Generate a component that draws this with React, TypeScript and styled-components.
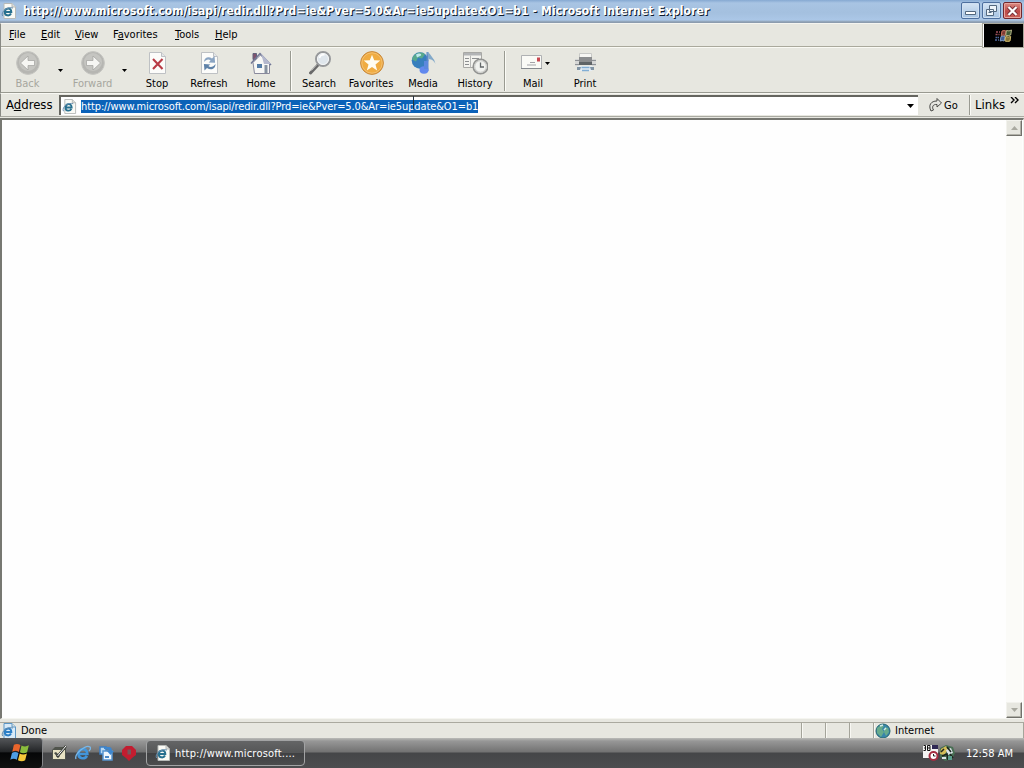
import React from "react";
import styled, { createGlobalStyle } from "styled-components";

const GlobalStyle = createGlobalStyle`
  * {
    box-sizing: border-box;
  }
  body {
    margin: 0;
    overflow: hidden;
    font-family: Tahoma, "DejaVu Sans Condensed", "DejaVu Sans", sans-serif;
    font-size: 11px;
    color: #000;
  }
  svg {
    display: block;
    flex: none;
  }
`;

const Screen = styled.div`
  display: flex;
  flex-direction: column;
  width: 1024px;
  height: 768px;
  background: #e7e7e0;
`;

const Text = styled.span<{ $spacing?: number; $size?: number }>`
  white-space: nowrap;
  font-size: ${(p) => p.$size ?? 11}px;
  letter-spacing: ${(p) => p.$spacing ?? 0}px;
`;

const TitleBar = styled.header`
  display: flex;
  align-items: center;
  height: 23px;
  padding: 0 2px 2px 1px;
  background: linear-gradient(#86a9d2 0, #a8c4e3 3px, #a4c0df 55%, #abc7e7 20px, #8c9cae 22px);
`;

const Title = styled.h1<{ $spacing: number }>`
  flex: 1;
  margin: 0 0 0 6px;
  color: #fff;
  font-size: 12px;
  font-weight: bold;
  line-height: 20px;
  white-space: nowrap;
  letter-spacing: ${(p) => p.$spacing}px;
  text-shadow: 1px 1px 0 #0c1a2c;
`;

const CaptionButton = styled.button<{ $close?: boolean }>`
  display: flex;
  align-items: center;
  justify-content: center;
  width: 19px;
  height: 17px;
  margin-left: 2px;
  padding: 0;
  border: 1px solid ${(p) => (p.$close ? "#71282e" : "#4d6f9e")};
  border-radius: 2px;
  background: ${(p) =>
    p.$close
      ? "linear-gradient(#dc8d84, #bd4a48 55%, #cb6259)"
      : "linear-gradient(#d5e4f3, #a5c2e2)"};
  box-shadow: inset 0 0 0 1px ${(p) => (p.$close ? "#e8a69f" : "#cfe0f2")};
`;

const MenuBar = styled.nav`
  display: flex;
  height: 25px;
  border-top: 1px solid #f5f5f0;
  border-left: 1px solid #888983;
`;

const MenuItems = styled.div`
  display: flex;
  flex: 1;
  align-items: center;
  height: 23px;
  padding: 0 0 2px 8px;
  border-bottom: 1px solid #aaa99c;
  box-shadow: 0 1px #fafaf4;
`;

const MenuItem = styled.span<{ $width: number }>`
  width: ${(p) => p.$width}px;
  white-space: nowrap;
`;

const Brand = styled.div`
  display: flex;
  align-items: center;
  justify-content: center;
  width: 40px;
  height: 23px;
  border-left: 1px solid #fff;
  background: #000;
  margin-right: 1px;
  outline: 1px solid #aaa99c;
`;

const Toolbar = styled.div`
  display: flex;
  height: 45px;
  padding-left: 1px;
  border-left: 1px solid #888983;
  border-bottom: 1px solid #999a91;
`;

const ToolButton = styled.div<{ $width?: number; $disabled?: boolean }>`
  display: flex;
  flex-direction: column;
  align-items: center;
  width: ${(p) => p.$width ?? 52}px;
  padding-top: 2px;
  color: ${(p) => (p.$disabled ? "#a6a69e" : "#000")};
  line-height: 15px;
`;

const IconRow = styled.div<{ $indent?: number }>`
  display: flex;
  align-items: center;
  height: 26px;
  padding-left: ${(p) => p.$indent ?? 0}px;
`;

const DropArrow = styled.div<{ $width?: number }>`
  display: flex;
  align-items: center;
  justify-content: center;
  width: ${(p) => p.$width ?? 14}px;
`;

const Separator = styled.div<{ $height?: number }>`
  width: 6px;
  height: ${(p) => p.$height ?? 40}px;
  margin-top: ${(p) => (p.$height ? 0 : 3)}px;
  background: linear-gradient(90deg, transparent 3px, #999a91 3px, #999a91 4px, #fbfbf6 4px, #fbfbf6 5px, transparent 5px);
`;

const AddressBar = styled.div`
  display: flex;
  align-items: center;
  height: 24px;
  margin-bottom: 1px;
  padding: 1px 2px 1px 5px;
  border-left: 1px solid #888983;
  border-top: 1px solid #f8f8f3;
  border-bottom: 1px solid #aaaaa2;
`;

const AddressLabel = styled.div`
  width: 53px;
  padding-bottom: 1px;
`;

const AddressField = styled.div`
  display: flex;
  align-items: center;
  width: 859px;
  height: 20px;
  padding: 0 2px 0 1px;
  border-top: 2px solid #65655f;
  border-left: 2px solid #65655f;
  background: #fff;
`;

const Selected = styled.span<{ $spacing: number }>`
  height: 13px;
  margin-left: 4px;
  background: #0b62b8;
  color: #fff;
  line-height: 13px;
  white-space: nowrap;
  letter-spacing: ${(p) => p.$spacing}px;
`;

const Spacer = styled.div`
  flex: 1;
`;

const GoButton = styled.div`
  display: flex;
  align-items: center;
  gap: 1px;
  width: 48px;
  padding-left: 11px;
`;

const LinksLabel = styled.div`
  display: flex;
  gap: 5px;
  padding: 0 0 1px 3px;
`;

const TextCursor = styled.div`
  position: absolute;
  left: 413px;
  top: 96px;
  width: 1px;
  height: 13px;
  background: #26323e;
`;

const Page = styled.main`
  display: flex;
  height: 601px;
  border: solid;
  border-width: 2px 1px 1px 2px;
  border-color: #777872 #f5f5f0 #f5f5f0 #777872;
  background: #fefefe;
`;

const Content = styled.div`
  flex: 1;
`;

const ScrollBar = styled.div`
  display: flex;
  flex-direction: column;
  justify-content: space-between;
  width: 16px;
  margin-right: 1px;
  background: #fbfbf8;
`;

const ScrollButton = styled.div`
  display: flex;
  align-items: center;
  justify-content: center;
  height: 16px;
  border: 1px solid;
  border-color: #f2f2ed #71716b #71716b #f2f2ed;
  background: #e7e7e0;
  box-shadow: inset -1px -1px #b1b1a8;
`;

const StatusBar = styled.footer`
  display: flex;
  height: 19px;
  padding-top: 3px;
`;

const StatusPane = styled.div<{ $width?: number }>`
  display: flex;
  align-items: center;
  gap: 4px;
  flex: ${(p) => (p.$width ? "none" : 1)};
  width: ${(p) => (p.$width ? `${p.$width}px` : "auto")};
  height: 16px;
  padding-left: 1px;
  border-top: 1px solid #aaa99f;
  border-right: 1px solid #a4a49a;
  box-shadow: 1px 0 #f8f8f3;
`;

const TaskBar = styled.div`
  display: flex;
  align-items: center;
  height: 30px;
  background: linear-gradient(#bbbcb8 0, #979797 3px, #727272 14px, #454648 15px, #4c4d4f 100%);
`;

const StartButton = styled.div`
  display: flex;
  align-items: center;
  justify-content: center;
  width: 43px;
  height: 30px;
  border-right: 1px solid #85878a;
  border-radius: 0 4px 4px 0;
  background: linear-gradient(#55575a, #242628 45%, #050607 50%, #111);
`;

const QuickLaunch = styled.div`
  display: flex;
  align-items: center;
  gap: 7px;
  width: 103px;
  padding-left: 8px;
`;

const TaskButton = styled.div`
  display: flex;
  align-items: center;
  gap: 4px;
  width: 159px;
  height: 26px;
  padding-left: 8px;
  border: 1px solid #a2a3a4;
  border-radius: 4px;
  background: linear-gradient(#646566, #555657 48%, #404143 52%, #4b4c4d);
  color: #fff;
`;

const Tray = styled.div`
  display: flex;
  align-items: center;
  padding-right: 11px;
  color: #fff;
`;

const Clock = styled.div`
  margin-left: 10px;
`;

function Triangle({ w = 5, up, color = "#000" }: { w?: number; up?: boolean; color?: string }) {
  const h = Math.ceil(w / 2);
  return (
    <svg width={w} height={h} viewBox={`0 0 ${w} ${h}`}>
      <path d={up ? `M0 ${h}H${w}L${w / 2} 0Z` : `M0 0H${w}L${w / 2} ${h}Z`} fill={color} />
    </svg>
  );
}

function IePageIcon({ size = 16, blue }: { size?: number; blue?: boolean }) {
  return (
    <svg width={size} height={size} viewBox="0 0 16 16">
      <path d="M3 .5h8l3.5 3.5v11.5H3z" fill={blue ? "#d9ebf8" : "#fafaf5"} stroke={blue ? "#5d97c6" : "#b7bab8"} />
      <path d="M11 .5V4h3.5" fill="#dcdeda" stroke={blue ? "#5d97c6" : "#b7bab8"} />
      <path
        d="M3 9h7.3c0-5-6.5-4.4-6.5.2 0 3.8 4.8 4.2 6.2 1.3"
        fill="none"
        stroke={blue ? "#2c7fc6" : "#27708f"}
        strokeWidth="2"
      />
      <path d="M1.5 13C-.5 8 7 3.5 12 5" fill="none" stroke="#648cae" />
    </svg>
  );
}

function IeIcon() {
  return (
    <svg width="16" height="16" viewBox="0 0 16 16">
      <path d="M3.3 9h9.1c0-7-9.3-6.1-8.9.4.3 4.7 6.4 5.1 8.4 1.4" fill="none" stroke="#4295db" strokeWidth="2.6" />
      <path d="M1 14C-1 9 11-1 15 2c1 1 0 3-1 4" fill="none" stroke="#79b7e8" strokeWidth="1.3" />
    </svg>
  );
}

function WindowsFlag({ size = 24 }: { size?: number }) {
  return (
    <svg width={size} height={size} viewBox="0 0 22 22">
      <path d="M4.5 3.5c2-1.2 4-1.1 6 .2L9 10c-2-1.3-4-1.3-6-.2z" fill="#e9652c" />
      <path d="M11.5 4.2c2.4 1.2 4.5 1.1 6.7-.2l-1.6 6.3c-2.2 1.2-4.4 1.3-6.6 0z" fill="#8abc3c" />
      <path d="M2.7 11c2-1.2 4-1.1 6 .1l-1.5 6.2c-2-1.3-4-1.2-6-.1z" fill="#4d9ee5" />
      <path d="M9.8 11.5c2.2 1.2 4.4 1.2 6.6 0l-1.6 6.2c-2.2 1.3-4.4 1.2-6.6-.1z" fill="#f5c83a" />
    </svg>
  );
}

// Outlined flag with a pixel trail, used in the corner of the menu bar
function BrandFlag() {
  return (
    <svg width="20" height="16" viewBox="0 0 20 16">
      <path d="M8 3q2-1 4 0l-.8 4.5q-2-1-4 0z" fill="#7c3a34" stroke="#c9705c" />
      <path d="M12.5 2.5q2.5 1 5-.5L16.700 7q-2.500 1-5 .4z" fill="#3e5a35" stroke="#b3b184" />
      <path d="M7 8.500q2-1 4 0L10.200 13q-2-1-4 0z" fill="#3e5d92" stroke="#7f9bc5" />
      <path d="M11.700 8.500q2.500 1 5 0L16 13q-2.500 1-5 0z" fill="#857438" stroke="#d0b968" />
      <path d="M2 4h2M5 4h1M1.500 6.500h2M4.500 6.500h1" stroke="#a0525c" strokeWidth="1.500" />
      <path d="M1.500 9.500h2M4 9.500h1M1 12h2M4 12h1" stroke="#4d68a0" strokeWidth="1.500" />
    </svg>
  );
}

function ArrowIcon({ forward }: { forward?: boolean }) {
  return (
    <svg width="26" height="26" viewBox="0 0 26 26">
      <circle cx="13" cy="13" r="11.4" fill="#b6b6b2" stroke="#c6c6c2" />
      <circle cx="13" cy="12" r="9" fill="#c5c5c1" />
      <path
        d="M5.500 13l7.500-7v4.500h6.500v5H13V20z"
        fill="#f6f6f3"
        stroke="#a0a09d"
        strokeWidth=".7"
        transform={forward ? "matrix(-1 0 0 1 26 0)" : undefined}
      />
    </svg>
  );
}

function StopIcon() {
  return (
    <svg width="26" height="26" viewBox="0 0 26 26">
      <path d="M5.5 2.5h12l4 4v17h-16z" fill="#fcfcfa" stroke="#bec1c4" />
      <path d="M17.5 2.5v4h4" fill="#e4e6e7" stroke="#bec1c4" />
      <path d="M9 9l9.5 10M18.5 9L9 19" stroke="#b83b45" strokeWidth="2.1" />
    </svg>
  );
}

function RefreshIcon() {
  return (
    <svg width="26" height="26" viewBox="0 0 26 26">
      <path d="M5.5 2.5h12l4 4v17h-16z" fill="#fcfcfa" stroke="#bec1c4" />
      <path d="M17.5 2.5v4h4" fill="#e4e6e7" stroke="#bec1c4" />
      <path d="M8 12c0-5 5-6 8-3.500l2.500-2.500.6 6.800-6.500-.4 2-1.800c-2-2-4.500-1-6.600 1.400z" fill="#8aa4c2" />
      <path d="M19.500 14c0 5.500-5 6.500-8.500 4l-2.500 2.500-.6-6.500 6.500.4-2 1.700c2 1.700 5 .9 7.100-2.100z" fill="#5f82a8" />
    </svg>
  );
}

function HomeIcon() {
  return (
    <svg width="26" height="26" viewBox="0 0 26 26">
      <path d="M5 3.500h3.500v6H5z" fill="#81536d" stroke="#62627a" />
      <path d="M5 12.5L12.5 5l9 9v9.500h-15z" fill="#f7f7f5" stroke="#89899c" />
      <path d="M3 13.500L12 3.5 23 15" fill="none" stroke="#717795" strokeWidth="1.500" />
      <path d="M13 3.5L23 14h-7z" fill="#b4b8cd" />
      <path d="M9 14h5v4H9z" fill="#547ca6" />
      <path d="M16.500 15h3v8h-3z" fill="#8792a0" />
    </svg>
  );
}

function SearchIcon() {
  return (
    <svg width="26" height="26" viewBox="0 0 26 26">
      <path d="M12 15L4.500 23" stroke="#696969" strokeWidth="3" strokeLinecap="round" />
      <path d="M10.500 15l-5 5.5" stroke="#bcbcbc" />
      <circle cx="17" cy="9" r="7" fill="#e4e9ec" stroke="#97999b" strokeWidth="2" />
      <circle cx="17" cy="9" r="5.500" fill="#dfe6ec" stroke="#f4f5f6" />
      <path d="M13.500 8q1-4 5-3" fill="none" stroke="#fff" strokeWidth="1.5" />
    </svg>
  );
}

function FavoritesIcon() {
  return (
    <svg width="26" height="26" viewBox="0 0 26 26">
      <circle cx="14" cy="13" r="11.4" fill="#e8a037" stroke="#c98b3f" />
      <circle cx="14" cy="13" r="10.2" fill="#f0ac42" stroke="#f5c274" />
      <path d="M14 4.7l2.200 5.600 6.100.3-4.800 3.900 1.700 5.900-5.200-3.300-5.200 3.300 1.700-5.900-4.800-3.900 6.100-.3z" fill="#fffdf2" />
    </svg>
  );
}

function MediaIcon() {
  return (
    <svg width="28" height="26" viewBox="0 0 28 26">
      <circle cx="11" cy="10.500" r="8.3" fill="#377fbd" />
      <path d="M4 6.500c4-5 10-5 12-2l-3 4-4-1-2 4-4-2z" fill="#58a98c" />
      <path d="M7 4.500c3-2 6-1 5 1l-4 2z" fill="#c0e9ed" />
      <path d="M18.500 2v19" stroke="#5c86c8" strokeWidth="2" />
      <path d="M18 2q3 1 5 5 3 3 3.500 7-2-4-4.500-4.500L19.500 9z" fill="#83a9c9" />
      <ellipse cx="15" cy="20" rx="4.500" ry="3.700" fill="#6289ee" />
      <path d="M15 11h4v8h-4z" fill="#5b88dd" />
    </svg>
  );
}

function HistoryIcon() {
  return (
    <svg width="26" height="26" viewBox="0 0 26 26">
      <path d="M1.5 2.5h18v15h-18z" fill="#f3f3ef" stroke="#a8a8a5" />
      <path d="M2 3h17v2.500H2z" fill="#b2b4b6" />
      <path d="M8.500 5.500v12" stroke="#b8b9b7" />
      <path d="M3 8.500h4M10 8.500h7M3 11.500h4M3 14.500h4" stroke="#8d8f91" />
      <circle cx="18.500" cy="16.500" r="7.3" fill="#ecedea" stroke="#929391" strokeWidth="1.6" />
      <circle cx="18.500" cy="16.500" r="5.800" fill="#f1f2ef" stroke="#c6c7c4" />
      <path d="M18.500 12.500v4.500h3.500" fill="none" stroke="#626769" strokeWidth="1.3" />
    </svg>
  );
}

function MailIcon() {
  return (
    <svg width="22" height="26" viewBox="0 0 22 26">
      <path d="M.5 5.5h20v13H.5z" fill="#fafaf6" stroke="#afb1b3" />
      <path d="M0 18.5h21" stroke="#868a8f" />
      <path d="M16 7.5h3v4h-3z" fill="#c94851" />
      <path d="M9 12.500h5M6 15h9" stroke="#a3a3a8" />
    </svg>
  );
}

function PrintIcon() {
  return (
    <svg width="26" height="26" viewBox="0 0 26 26">
      <path d="M7.500 3.500h12v4h-12z" fill="#f6f6f3" stroke="#c8c9c7" />
      <path d="M3 9h4v7H3zM20 9h4v7h-4z" fill="#d6d7d6" />
      <path d="M3 10.500h4M20 10.500h4M3 14.500h5M19 14.500h5" stroke="#8e9296" />
      <path d="M7 7h13v5H7z" fill="#8b8d8f" />
      <path d="M7 12h13v3H7z" fill="#5f6467" />
      <path d="M6 16h15l-1 5H7z" fill="#e4edf4" />
      <path d="M5 17h4l-1 3H5zM18 17h4v3h-3z" fill="#8194a4" />
      <path d="M9.500 17.500h8M10 20.500h7" stroke="#82aed4" strokeWidth="1.500" />
    </svg>
  );
}

function GoIcon() {
  return (
    <svg width="14" height="16" viewBox="0 0 14 16">
      <path d="M2 14C-1 8 2 4 8 4V1.500L12.500 6 8 10V7.500C4 7 2.500 10 4.500 13z" fill="#e6e6e0" stroke="#4a4a47" />
    </svg>
  );
}

function GlobeIcon() {
  return (
    <svg width="16" height="16" viewBox="0 0 16 16">
      <circle cx="8" cy="8" r="7" fill="#3885aa" stroke="#256670" />
      <path d="M2 5l4-3 3 1-2 3 2 3-3 5-4-4zM10 4l3 1 1 4-3 4-2-4z" fill="#67ab8c" />
      <path d="M5 3l3-1M9 7l2-2" stroke="#d5edeb" strokeWidth="1.5" />
    </svg>
  );
}

function DesktopIcon() {
  return (
    <svg width="17" height="16" viewBox="0 0 17 16">
      <path d="M1 5l3-3h11v13H1z" fill="#50544c" />
      <path d="M2 5h12v9H2z" fill="#e9e4c4" />
      <path d="M3 8l4 5 2-2-4-4z" fill="#4b4f46" />
      <path d="M6 12l9-11" stroke="#373a34" strokeWidth="2.500" />
      <path d="M6.500 11L15 1" stroke="#fff" />
    </svg>
  );
}

function OutlookIcon() {
  return (
    <svg width="16" height="16" viewBox="0 0 16 16">
      <path d="M2 2h6v7H2z" fill="#b9d8f1" stroke="#3b7fc5" strokeWidth="1.500" />
      <path d="M5 6h9v9H5z" fill="#f0f7fc" stroke="#5795d0" strokeWidth="1.500" />
      <path d="M6 2h5q3 0 3 4h2l-3.500 4L9 6h2q0-2-5-2z" fill="#3d86ce" />
      <path d="M7 12h4" stroke="#4b89c8" strokeWidth="2" />
    </svg>
  );
}

function OperaIcon() {
  return (
    <svg width="16" height="16" viewBox="0 0 16 16">
      <path d="M5 1h6l4 4v5l-4 3-3 3-3-3-4-3V5z" fill="#c31d30" />
      <path d="M6.500 4.500h3.500v5H6.500z" fill="#79555c" />
    </svg>
  );
}

function TrayIcons() {
  return (
    <svg width="34" height="18" viewBox="0 0 34 18">
      <path d="M1 1h15v13H1z" fill="#f4f4f3" />
      <path d="M1.500 1.500h2v2.500h-1 1v2.500h-2M5.500 1.500h2.500v5H5.500zM5.500 4h2.500" fill="none" stroke="#111" />
      <path d="M10 1h6v4h-6z" fill="#302954" />
      <circle cx="11.5" cy="12" r="4" fill="#fff" stroke="#a52d41" strokeWidth="2" />
      <path d="M11.5 10v2h2" stroke="#222" fill="none" />
      <path d="M18 4l6-3 7 2 2 6-3 6-7 2-5-4z" fill="#496f54" />
      <path d="M19 5l5-3 2 4-4 5-4-1z" fill="#d4bd58" />
      <path d="M24 6l5-2 2 5-5 2z" fill="#dce5e9" />
      <path d="M20 12l5-2 1 6M28 10l3 4M25 3l4 5M19 8l3-3" fill="none" stroke="#1b251e" strokeWidth="1.5" />
      <path d="M20 13h4v2h-4z" fill="#dce5e9" />
      <path d="M26 12h4v4h-4z" fill="#599d8b" />
    </svg>
  );
}

const menus = [
  { pre: "", key: "F", post: "ile", width: 32 },
  { pre: "", key: "E", post: "dit", width: 34 },
  { pre: "", key: "V", post: "iew", width: 38 },
  { pre: "F", key: "a", post: "vorites", width: 62 },
  { pre: "", key: "T", post: "ools", width: 40 },
  { pre: "", key: "H", post: "elp", width: 30 },
];

const url = "http://www.microsoft.com/isapi/redir.dll?Prd=ie&Pver=5.0&Ar=ie5update&O1=b1";

function Tool({ label, indent, width, disabled, children }: any) {
  return (
    <ToolButton $width={width} $disabled={disabled}>
      <IconRow $indent={indent}>{children}</IconRow>
      <Text>{label}</Text>
    </ToolButton>
  );
}

function App() {
  return (
    <Screen>
      <GlobalStyle />
      <TitleBar>
        <IePageIcon />
        <Title $spacing={0.1}>{url} - Microsoft Internet Explorer</Title>
        <CaptionButton>
          <svg width="11" height="9" viewBox="0 0 11 9">
            <path d="M.500 5.500h10v3H.500z" fill="#fff" stroke="#53687f" />
          </svg>
        </CaptionButton>
        <CaptionButton>
          <svg width="13" height="11" viewBox="0 0 13 11">
            <path d="M4.5.5h7v6h-7zM1.5 4.5h7v6h-7z" fill="#edf4fa" stroke="#53687f" />
            <path d="M3.5 7.5h3" stroke="#53687f" />
          </svg>
        </CaptionButton>
        <CaptionButton $close>
          <svg width="11" height="10" viewBox="0 0 11 10">
            <path d="M1.5 1l8 8M9.5 1l-8 8" stroke="#773038" strokeWidth="4" />
            <path d="M1.5 1l8 8M9.5 1l-8 8" stroke="#fff" strokeWidth="2.2" />
          </svg>
        </CaptionButton>
      </TitleBar>

      <MenuBar>
        <MenuItems>
          {menus.map((m) => (
            <MenuItem key={m.key} $width={m.width}>
              {m.pre}
              <u>{m.key}</u>
              {m.post}
            </MenuItem>
          ))}
        </MenuItems>
        <Brand>
          <BrandFlag />
        </Brand>
      </MenuBar>

      <Toolbar>
        <Tool label="Back" width={51} disabled>
          <ArrowIcon />
        </Tool>
        <DropArrow>
          <Triangle />
        </DropArrow>
        <Tool label="Forward" width={51} disabled>
          <ArrowIcon forward />
        </Tool>
        <DropArrow $width={13}>
          <Triangle />
        </DropArrow>
        <Tool label="Stop">
          <StopIcon />
        </Tool>
        <Tool label="Refresh">
          <RefreshIcon />
        </Tool>
        <Tool label="Home">
          <HomeIcon />
        </Tool>
        <Separator />
        <Tool label="Search">
          <SearchIcon />
        </Tool>
        <Tool label="Favorites">
          <FavoritesIcon />
        </Tool>
        <Tool label="Media">
          <MediaIcon />
        </Tool>
        <Tool label="History">
          <HistoryIcon />
        </Tool>
        <Separator />
        <Tool label="Mail" indent={7}>
          <MailIcon />
          <DropArrow $width={10}>
            <Triangle />
          </DropArrow>
        </Tool>
        <Tool label="Print">
          <PrintIcon />
        </Tool>
      </Toolbar>

      <AddressBar>
        <AddressLabel>
          <Text $size={13}>
            A<u>d</u>dress
          </Text>
        </AddressLabel>
        <AddressField>
          <IePageIcon size={15} />
          <Selected $spacing={-0.107}>{url}</Selected>
          <Spacer />
          <DropArrow $width={12}>
            <Triangle w={7} />
          </DropArrow>
        </AddressField>
        <GoButton>
          <GoIcon />
          <Text>Go</Text>
        </GoButton>
        <Separator $height={20} />
        <LinksLabel>
          <Text $size={13}>Links</Text>
          <svg width="9" height="7" viewBox="0 0 9 7">
            <path d="M1 0l3 3-3 3M5 0l3 3-3 3" fill="none" stroke="#000" strokeWidth="1.4" />
          </svg>
        </LinksLabel>
      </AddressBar>
      <TextCursor />

      <Page>
        <Content />
        <ScrollBar>
          <ScrollButton>
            <Triangle w={7} up color="#a9a9a0" />
          </ScrollButton>
          <ScrollButton>
            <Triangle w={7} color="#a9a9a0" />
          </ScrollButton>
        </ScrollBar>
      </Page>

      <StatusBar>
        <StatusPane>
          <IePageIcon blue />
          <Text>Done</Text>
        </StatusPane>
        <StatusPane $width={24} />
        <StatusPane $width={24} />
        <StatusPane $width={24} />
        <StatusPane $width={150}>
          <GlobeIcon />
          <Text>Internet</Text>
        </StatusPane>
      </StatusBar>

      <TaskBar>
        <StartButton>
          <WindowsFlag />
        </StartButton>
        <QuickLaunch>
          <DesktopIcon />
          <IeIcon />
          <OutlookIcon />
          <OperaIcon />
        </QuickLaunch>
        <TaskButton>
          <IePageIcon />
          <Text $spacing={0.2}>http://www.microsoft....</Text>
        </TaskButton>
        <Spacer />
        <Tray>
          <TrayIcons />
          <Clock>
            <Text>12:58 AM</Text>
          </Clock>
        </Tray>
      </TaskBar>
    </Screen>
  );
}

export default App;
